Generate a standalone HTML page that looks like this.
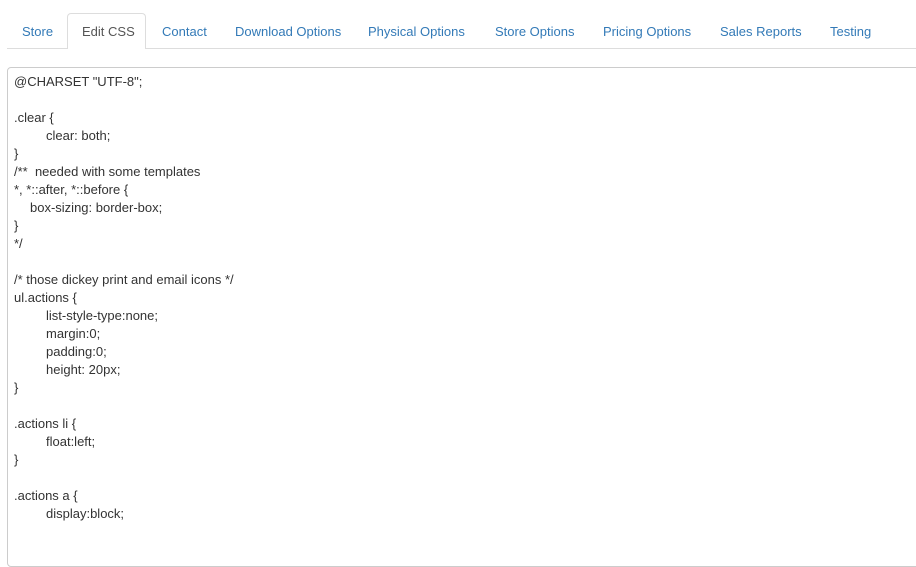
<!DOCTYPE html>
<html><head><meta charset="utf-8"><style>
body{margin:0;background:#fff;font-family:"Liberation Sans",Arial,sans-serif;font-size:13px;color:#333;overflow:hidden;width:916px;height:525px}
.nav{position:absolute;left:7px;top:13px;width:909px;height:35px;border-bottom:1px solid #ddd}
.nav a{position:absolute;top:0;display:block;padding:0 14px;height:35px;line-height:36px;color:#337ab7;border:1px solid transparent;border-bottom:none;border-radius:4px 4px 0 0;white-space:nowrap;box-sizing:border-box}
.nav a.act{color:#555;border-color:#ddd;background:#fff;height:36px;width:79px}
.ta{position:absolute;left:7px;top:67px;width:960px;height:500px;border:1px solid #ccc;border-radius:4px;box-sizing:border-box;padding:5px 6px;margin:0;font-family:"Liberation Sans",Arial,sans-serif;font-size:13px;line-height:18px;color:#333;white-space:pre;tab-size:32px;-moz-tab-size:32px}
</style></head><body>
<div class="nav">
<a style="left:0">Store</a>
<a class="act" style="left:60px">Edit CSS</a>
<a style="left:140px">Contact</a>
<a style="left:213px">Download Options</a>
<a style="left:346px">Physical Options</a>
<a style="left:473px">Store Options</a>
<a style="left:581px">Pricing Options</a>
<a style="left:698px">Sales Reports</a>
<a style="left:808px">Testing</a>
</div>
<div class="ta">@CHARSET "UTF-8";

.clear {
	clear: both;
}
/**  needed with some templates
*, *::after, *::before {
<span style="padding-left:16px">box-sizing: border-box;</span>
}
*/

/* those dickey print and email icons */
ul.actions {
	list-style-type:none;
	margin:0;
	padding:0;
	height: 20px;
}

.actions li {
	float:left;
}

.actions a {
	display:block;
</div>
</body></html>
